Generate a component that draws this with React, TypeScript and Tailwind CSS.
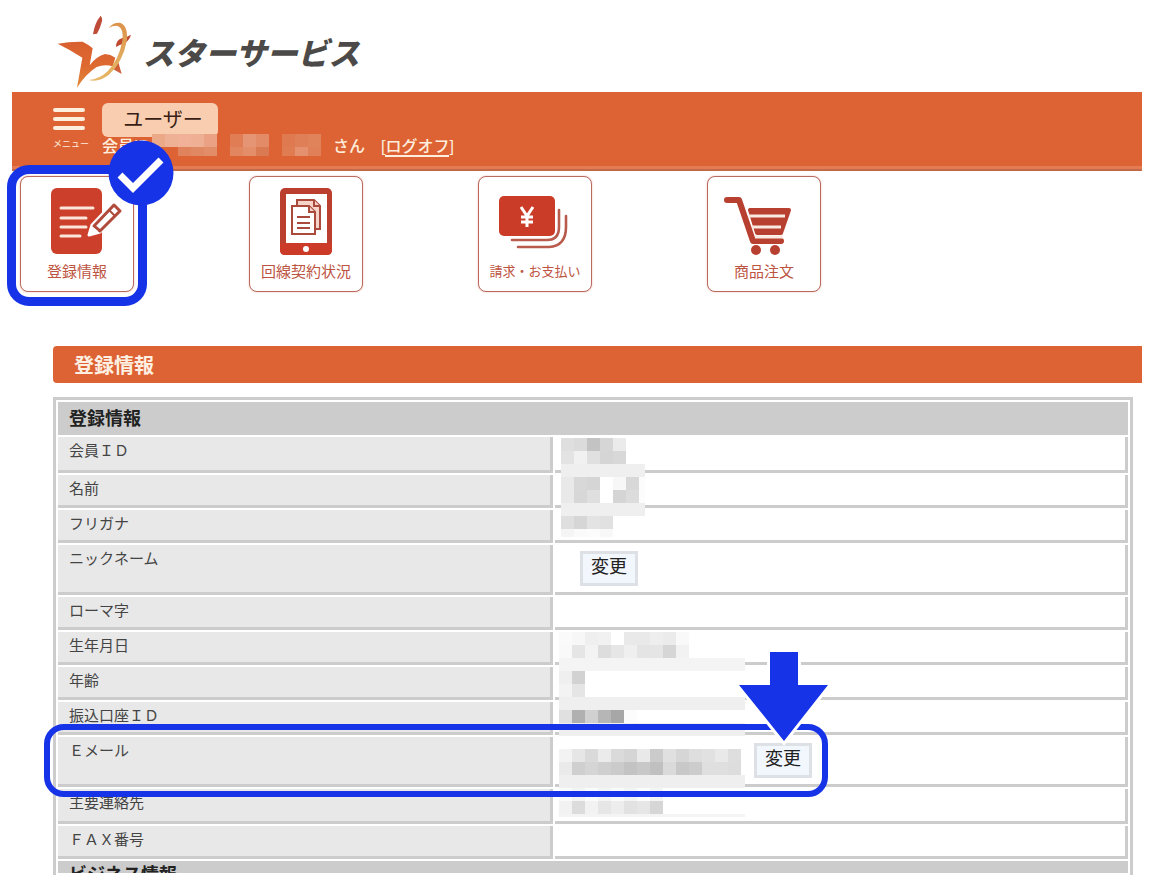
import React from 'react';

const FONT = "font-['Liberation_Sans','Noto_Sans_CJK_JP',sans-serif]";

interface Row {
  label: string;
  height: string;
  action?: string; // left margin of the change button, when the row has one
}

const ROWS: Row[] = [
  { label: '会員ＩＤ', height: 'h-9' },
  { label: '名前', height: 'h-[33px]' },
  { label: 'フリガナ', height: 'h-[33px]' },
  { label: 'ニックネーム', height: 'h-[50px]', action: 'ml-[25px]' },
  { label: 'ローマ字', height: 'h-[33px]' },
  { label: '生年月日', height: 'h-[33px]' },
  { label: '年齢', height: 'h-[33px]' },
  { label: '振込口座ＩＤ', height: 'h-[33px]' },
  { label: 'Ｅメール', height: 'h-[50px]', action: 'ml-[199px]' },
  { label: '主要連絡先', height: 'h-[35px]' },
  { label: 'ＦＡＸ番号', height: 'h-[33px]' },
];

// Each row lists its cells; a single value fills the whole row, "-" is left clear
const NAME_MASK = [
  'dfdfdf dbdbdb c3c3c3 d6d6d6 ebebeb -',
  'e3e3e3 f1f1f1 e0e0e0 d5d5d5 d8d8d8 -',
  'efefef',
  'e9e9e9 d8d8d8 d5d5d5 ffffff f7f7f7 d8d8d8 fcfcfc',
  'e9e9e9 d7d7d7 dfdfdf ffffff d5d5d5 dcdcdc fcfcfc',
  'efefef',
  'dfdfdf d6d6d6 e3e3e3 e1e1e1 -',
  'f5f5f5 fafafa fcfcfc f8f8f8 -',
];

const DETAIL_MASK = [
  'fafafa f7f7f7 efefef f1f1f1 ffffff e9e9e9 e9e9e9 eeeeee ebebeb f9f9f9',
  'f9f9f9 e5e5e5 f3f3f3 dddddd e6e6e6 efefef e4e4e4 e5e5e5 d6d6d6 f2f2f2',
  'f4f4f4',
  'efefef d2d2d2 -',
  'f3f3f3 e5e5e5 -',
  'efefef',
  'e0e0e0 b0b0b0 d0d0d0 b6b6b6 a7a7a7 fcfcfc',
  'efefef',
  '- -',
  'f3f3f3 e6e6e6 dadada ebebeb dadada d5d5d5 e9e9e9 cbcbcb e0e0e0 d6d6d6 dedede e1e1e1 e9e9e9 dedede',
  'eaeaea cfcfcf d5d5d5 cfcfcf cbcbcb c3c3c3 c8c8c8 c0c0c0 dadada c8c8c8 cccccc dfdfdf dfdfdf dddddd',
  'efefef',
  'fafafa f4f4f4 fbfbfb f4f4f4 fafafa f4f4f4 fcfcfc f4f4f4',
  'f2f2f2 dcdcdc f2f2f2 e6e6e6 ededed e2e2e2 e6e6e6 d6d6d6',
  'f4f4f4',
];

const HEADER_MASKS = [
  ['eba988 efb196 f1b199 efaf94 eba184', '- - e0825c e08862 e28c68'],
  ['e07d54 e59573 e38b66', 'e2865f e38d69 da7a53'],
  ['df7a50 df7f57 e0825a', 'e07c52 e59170 e08058'],
];

const Mask: React.FC<{ rows: string[]; className?: string }> = ({ rows, className = '' }) => (
  <div aria-hidden="true" className={`overflow-hidden ${className}`}>
    {rows.map((row, i) => {
      const cells = row.split(' ');
      return (
        <div key={i} className="flex h-[13px]">
          {cells.map((c, j) => (
            <span
              key={j}
              className={cells.length === 1 ? 'h-full w-full' : 'h-full w-[13px] shrink-0'}
              style={{ backgroundColor: c === '-' ? 'transparent' : `#${c}` }}
            />
          ))}
        </div>
      );
    })}
  </div>
);

const Logo = () => (
  <svg viewBox="18 15 225 225" className="h-[75px] w-[75px]" aria-hidden="true">
    <defs>
      <linearGradient id="body" x1="0" y1="0" x2="0" y2="1">
        <stop offset="0" stopColor="#d9602f" />
        <stop offset="0.5" stopColor="#dd6830" />
        <stop offset="1" stopColor="#e28a3c" />
      </linearGradient>
      <linearGradient id="ring" x1="0" y1="0" x2="0" y2="1">
        <stop offset="0" stopColor="#dc934c" />
        <stop offset="1" stopColor="#e5b866" />
      </linearGradient>
    </defs>
    <path
      d="M23 107 Q60 100 98 101 Q113 108 128 121 L119 172 Q136 147 165 138 Q182 139 196 149 L188 175 Q164 168 140 177 Q106 199 81 239 L97 149 Q62 126 23 107 Z"
      fill="url(#body)"
    />
    <path d="M205 163 L215 198 L190 184 Q199 175 205 163 Z" fill="#cf5f38" />
    <path d="M129 79 Q134 44 152 23 Q159 32 155 43 Q150 63 141 77 Z" fill="#bf4c38" />
    <path d="M198 117 Q198 95 217 90 Q230 88 243 80 Q237 100 221 107 Q209 110 198 117 Z" fill="#bf4830" />
    <path
      d="M176 60 Q189 43 209 44 Q234 51 231 96 Q218 164 176 201 Q146 224 116 216 Q148 214 173 190 Q207 154 217 98 Q222 57 199 53 Q187 53 176 60 Z"
      fill="url(#ring)"
    />
  </svg>
);

const RegistrationIcon = () => (
  <svg viewBox="0 0 114 84" className="h-[84px] w-[114px]" aria-hidden="true">
    <rect x="31" y="11" width="51" height="66" rx="6" fill="#cb3f2b" />
    <g stroke="#fbe6dc" strokeWidth="3" strokeLinecap="round">
      <path d="M41 31H73M41 41H66M41 50H66M41 59H60" />
    </g>
    <path d="M69 58 L72 48 L93 26 L101 34 L80 55 Z" fill="#fff" stroke="#fff" strokeWidth="3" strokeLinejoin="round" />
    <path d="M74 49 L94 28 L100 34 L80 54 Z" fill="#fff" stroke="#b04a3b" strokeWidth="3" strokeLinejoin="round" />
    <path d="M89 33L95 39" stroke="#b04a3b" strokeWidth="2" />
    <path d="M69 58L73 50L78 54Z" fill="#fff" />
  </svg>
);

const ContractIcon = () => (
  <svg viewBox="0 0 114 84" className="h-[84px] w-[114px]" aria-hidden="true">
    <rect x="31" y="11" width="52" height="67" rx="5" fill="#bb3f2e" />
    <path d="M31 66H83V73Q83 78 78 78H36Q31 78 31 73Z" fill="#cb3b28" />
    <rect x="37" y="17" width="41" height="49" fill="#fff" />
    <circle cx="57" cy="72" r="3" fill="#fff" />
    <g fill="#f6d3c8" stroke="#a94a3c" strokeWidth="2">
      <path d="M48 23H65L71 29V52H48Z" />
      <path d="M65 23V29H71" />
      <path d="M43 29H60L66 35V57H43Z" fill="#fff" />
      <path d="M60 29V35H66" />
      <path d="M48 40H61M48 46H61M48 51H61" />
    </g>
  </svg>
);

const BillingIcon = () => (
  <svg viewBox="0 0 114 84" className="h-[84px] w-[114px]" aria-hidden="true">
    <rect x="21" y="19" width="56" height="40" rx="5" fill="#cb3c28" />
    <g stroke="#fff" strokeWidth="3" fill="none">
      <path d="M43 30L49 39L55 30M49 38V50M43 40H55M43 45H55" />
    </g>
    <g stroke="#b85a4c" strokeWidth="2.6" strokeLinecap="round" fill="none">
      <path d="M81 33V50Q81 63 69 63H34" />
      <path d="M88 39V50Q88 69 71 70H40" />
    </g>
  </svg>
);

const OrderIcon = () => (
  <svg viewBox="0 0 114 84" className="h-[84px] w-[114px]" aria-hidden="true">
    <g fill="none" stroke="#b84030" strokeLinecap="round" strokeLinejoin="round">
      <path d="M20 23H32L46 64H74" strokeWidth="6" />
      <path d="M43 33H82L74 56H50Z" strokeWidth="4" fill="#b84030" />
    </g>
    <path d="M42 39H78M45 50H74M48 60H76" stroke="#fbeae2" strokeWidth="3" />
    <circle cx="49" cy="73" r="5" fill="#b84030" />
    <circle cx="68" cy="73" r="5" fill="#b84030" />
  </svg>
);

const CARDS = [
  { label: '登録情報', Icon: RegistrationIcon, size: 'text-[15px]' },
  { label: '回線契約状況', Icon: ContractIcon, size: 'text-[15px]' },
  { label: '請求・お支払い', Icon: BillingIcon, size: 'text-[13px]' },
  { label: '商品注文', Icon: OrderIcon, size: 'text-[15px]' },
];

const Header = () => (
  <header className="flex h-[79px] items-start gap-3 border-b-2 border-[#c26a48] bg-[#de6334] pt-[11px] pl-[41px] text-[#fdeedd] shadow-[inset_0_-3px_0_#e57b52]">
    <button type="button" className="flex w-[37px] flex-col items-start pt-[5px]">
      <span className="flex flex-col gap-[5px]">
        <span className="h-1 w-8 rounded-sm bg-[#fdeedd]" />
        <span className="h-1 w-8 rounded-sm bg-[#fdeedd]" />
        <span className="h-1 w-8 rounded-sm bg-[#fdeedd]" />
      </span>
      <span className="mt-2 text-[9px] leading-[12px] whitespace-nowrap">メニュー</span>
    </button>
    <div>
      <button
        type="button"
        className="block h-[34px] w-[116px] rounded-md bg-[#f8cdb0] pr-2 pl-[14px] text-xl leading-[34px] text-[#3a1d14]"
      >
        ユーザー
      </button>
      <div className="-mt-[3px] flex items-center text-base leading-[26px]">
        <span className="w-[50px] font-medium whitespace-nowrap">会員ID</span>
        <div className="flex gap-[13px] self-start">
          {HEADER_MASKS.map((rows, i) => (
            <Mask key={i} rows={rows} className="h-[22px]" />
          ))}
        </div>
        <span className="ml-3 font-medium">さん</span>
        <span className="ml-4 font-medium">
          [
          <a href="#logoff" className="border-b-2 border-[#fdeedd]">
            ログオフ
          </a>
          ]
        </span>
      </div>
    </div>
  </header>
);

const CardNav = () => (
  <nav className="relative mt-[5px] ml-2 flex gap-[115px]">
    {CARDS.map(({ label, Icon, size }) => (
      <a
        key={label}
        href={`#${label}`}
        className="flex h-[116px] w-[114px] flex-col items-center rounded-lg border border-[#b9695e] bg-white text-[#bd5442] shadow-[0_0_2px_#eab5a8]"
      >
        <Icon />
        <span className={`leading-[22px] whitespace-nowrap ${size}`}>{label}</span>
      </a>
    ))}
    <div className="absolute -top-[11px] -left-[13px] h-[141px] w-[140px] rounded-[22px] border-9 border-[#1733e8]" />
    <svg viewBox="0 0 66 66" className="absolute -top-[36px] left-[88px] h-[66px] w-[66px]" aria-hidden="true">
      <circle cx="33" cy="33" r="32.5" fill="#1733e8" />
      <path d="M12 35L25 48L53 20" fill="none" stroke="#fff" strokeWidth="7" />
    </svg>
  </nav>
);

const InfoTable = () => (
  <div className="relative mt-[14px] mr-[9px] ml-[41px]">
    <table className="w-full table-fixed border-separate border-spacing-[2px] border-3 border-b-0 border-[#cccccc] text-left text-[15px] leading-5 text-[#444]">
      <colgroup>
        <col className="w-[495px]" />
        <col />
      </colgroup>
      <tbody>
        <tr>
          <th colSpan={2} className="h-[33px] bg-[#cccccc] pl-[11px] text-lg leading-7 font-bold text-[#222]">
            登録情報
          </th>
        </tr>
        {ROWS.map(({ label, height, action }) => (
          <tr key={label}>
            <th
              scope="row"
              className={`border-r-3 border-b-3 border-[#cccccc] bg-[#e8e8e8] pt-1 pl-[11px] align-top font-normal ${height}`}
            >
              {label}
            </th>
            <td className="border-r-3 border-b-3 border-[#cccccc] bg-white align-top">
              {action && (
                <button
                  type="button"
                  aria-label={`${label}を変更`}
                  className={`mt-[6px] block h-[35px] w-[58px] border-3 border-[#dde0e5] bg-[#f2f6fd] pb-[3px] text-lg leading-[26px] text-[#222] ${action}`}
                >
                  変更
                </button>
              )}
            </td>
          </tr>
        ))}
        <tr>
          <th colSpan={2} className="bg-[#cccccc] pl-[11px] text-lg leading-7 font-bold text-[#222]">
            <div className="h-[12px] overflow-hidden">ビジネス情報</div>
          </th>
        </tr>
      </tbody>
    </table>

    <Mask rows={NAME_MASK} className="absolute top-[41px] left-[508px] h-[99px] w-[84px]" />
    <Mask rows={DETAIL_MASK} className="absolute top-[235px] left-[506px] h-[185px] w-[186px]" />

    <div className="pointer-events-none absolute top-[327px] -left-[9px] h-[73px] w-[784px] rounded-[20px] border-6 border-[#1733e8]" />
    <svg viewBox="0 0 100 100" className="absolute top-[250px] left-[681px] h-[100px] w-[100px]" aria-hidden="true">
      <path
        d="M36 5H64V38H94L50 94L5 38H36Z"
        fill="#1733e8"
        stroke="#fff"
        strokeWidth="6"
        paintOrder="stroke"
      />
    </svg>
  </div>
);

const App: React.FC = () => {
  return (
    <div className={`bg-white pr-[10px] pb-[11px] pl-3 ${FONT}`}>
      <div className="flex h-[92px] items-start pt-[13px] pl-[44px]">
        <Logo />
        <h1 className="ml-3 text-[31px] leading-[84px] font-black whitespace-nowrap text-[#4c4a48] italic">
          スターサービス
        </h1>
      </div>
      <Header />
      <CardNav />
      <main className="mt-[54px]">
        <h2 className="ml-[41px] h-[37px] rounded-l bg-[#de6334] pl-[21px] text-xl leading-[40px] font-bold text-[#fdf0e2]">
          登録情報
        </h2>
        <InfoTable />
      </main>
    </div>
  );
};

export default App;
